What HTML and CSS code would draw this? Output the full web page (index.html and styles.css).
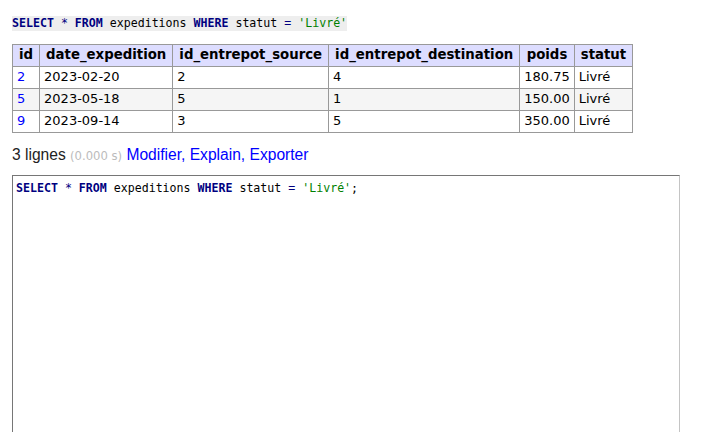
FILE: index.html
```html
<!DOCTYPE html>
<html lang="fr">
<head>
<meta charset="utf-8">
<title>SQL</title>
<link rel="stylesheet" href="styles.css">
</head>
<body>
<p class="query"><code class="sql"><span class="kw">SELECT</span> <span class="op">*</span> <span class="kw">FROM</span> expeditions <span class="kw">WHERE</span> statut <span class="op">=</span> <span class="str">'Livré'</span></code></p>
<table class="results">
<thead>
<tr><th>id</th><th>date_expedition</th><th>id_entrepot_source</th><th>id_entrepot_destination</th><th>poids</th><th>statut</th></tr>
</thead>
<tbody>
<tr><td><a href="#">2</a></td><td>2023-02-20</td><td>2</td><td>4</td><td>180.75</td><td>Livré</td></tr>
<tr><td><a href="#">5</a></td><td>2023-05-18</td><td>5</td><td>1</td><td>150.00</td><td>Livré</td></tr>
<tr><td><a href="#">9</a></td><td>2023-09-14</td><td>3</td><td>5</td><td>350.00</td><td>Livré</td></tr>
</tbody>
</table>
<p class="summary">3 lignes <span class="time">(0.000 s)</span> <a href="#">Modifier</a><span class="sep">,</span> <a href="#">Explain</a><span class="sep">,</span> <a href="#">Exporter</a></p>
<pre class="editor"><span class="kw">SELECT</span> <span class="op">*</span> <span class="kw">FROM</span> expeditions <span class="kw">WHERE</span> statut <span class="op">=</span> <span class="str">'Livré'</span>;</pre>
</body>
</html>
```
FILE: styles.css
```css
html, body {
  margin: 0;
  padding: 0;
  background: #fff;
}
body {
  padding: 0 12px;
  font-family: "DejaVu Sans", Verdana, sans-serif;
  font-size: 13px;
  color: #000;
}
.query {
  margin: 15px 0 0;
  line-height: 15px;
}
.sql {
  display: inline-block;
  background: #eee;
  font-family: "DejaVu Sans Mono", monospace;
  font-size: 11.6px;
  line-height: 15px;
}
.kw {
  color: #000080;
  font-weight: bold;
}
.op {
  color: #000080;
}
.str {
  color: #008000;
}
.results {
  margin-top: 13px;
  border-collapse: collapse;
  font-size: 13px;
  line-height: 16px;
}
.results th,
.results td {
  border: 1px solid #999;
  padding: 2px 4px 3px;
  text-align: left;
  white-space: nowrap;
}
.results th {
  background: #ddf;
  font-weight: bold;
  font-size: 13.3px;
  padding: 2px 6px 3px;
  text-align: center;
}
.results tbody tr:nth-child(2n) {
  background: #f5f5f5;
}
.results a {
  color: #00f;
  text-decoration: none;
}
.summary {
  margin: 13px 0 0;
  font-family: "Liberation Sans", Arial, sans-serif;
  font-size: 15.6px;
  line-height: 17px;
  color: #222;
}
.summary .time {
  font-family: "DejaVu Sans", Verdana, sans-serif;
  color: #bbb;
  font-size: 11.6px;
}
.summary a,
.summary .sep {
  color: #00f;
  text-decoration: none;
}
.editor {
  margin: 10px 0 0;
  width: 660px;
  height: 300px;
  padding: 5px 3px 3px;
  border: 1px solid;
  border-color: #767676 #c4c4c4 #c4c4c4 #767676;
  font-family: "DejaVu Sans Mono", monospace;
  font-size: 11.6px;
  line-height: 15px;
  color: #000;
}
```
